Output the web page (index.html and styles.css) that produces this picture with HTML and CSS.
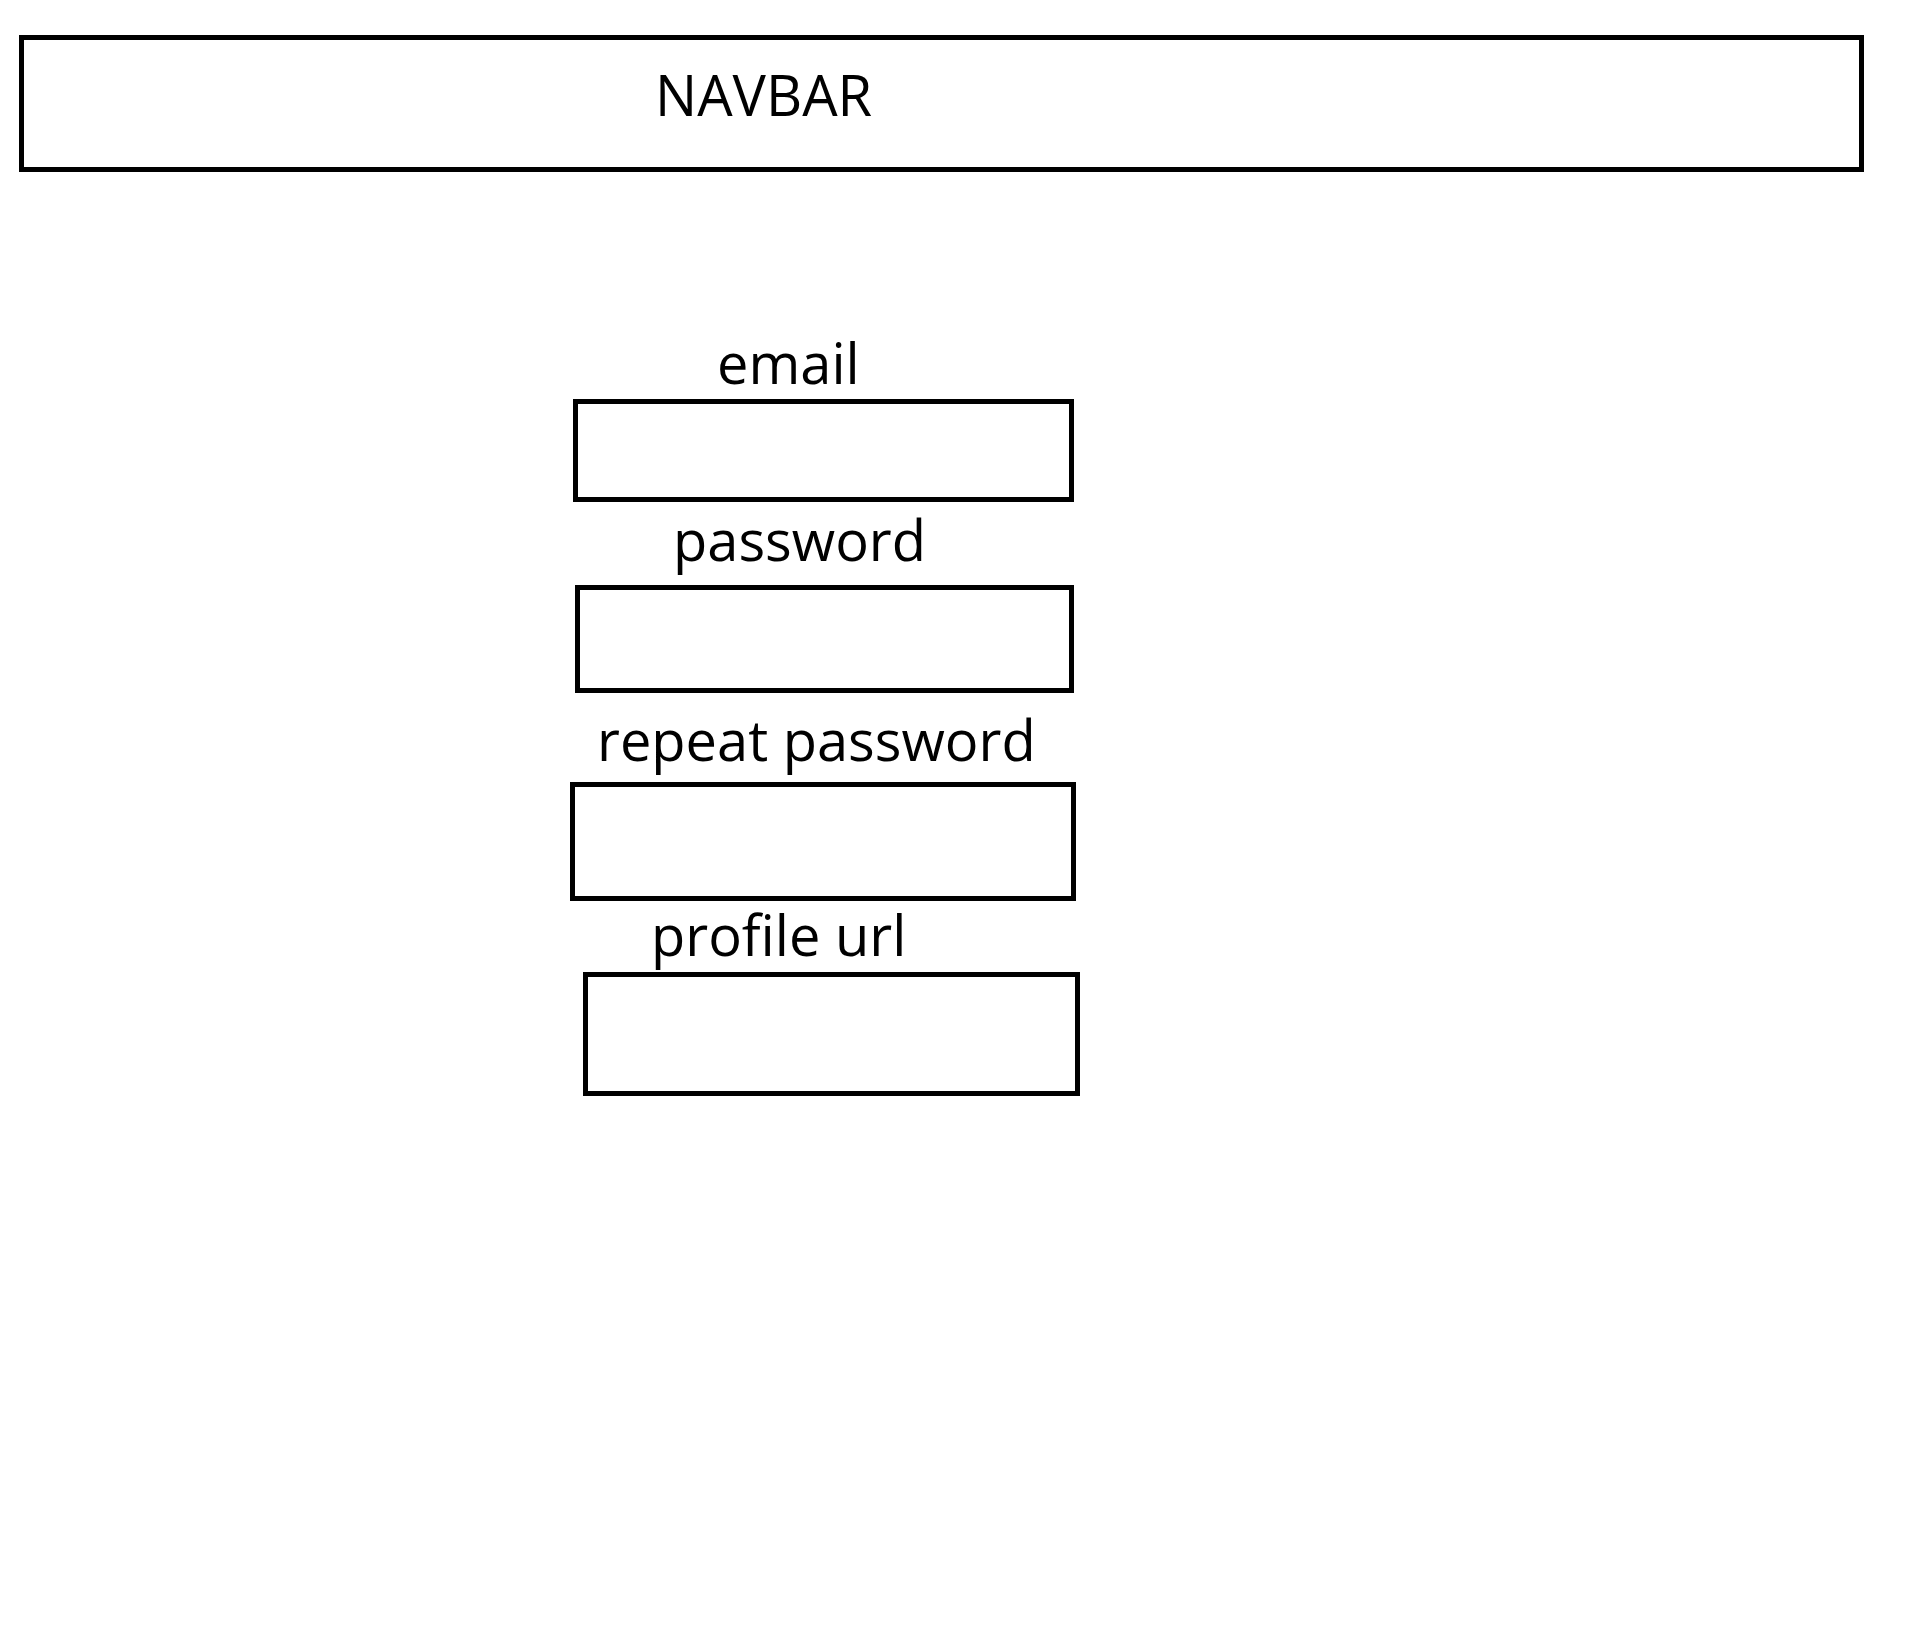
FILE: index.html
```html
<!DOCTYPE html>
<html lang="en">
  <head>
    <meta charset="UTF-8" />
    <meta name="viewport" content="width=device-width, initial-scale=1.0" />
    <title>Sign up</title>
    <link rel="stylesheet" href="styles.css">
  </head>
  <body>
    <header class="navbar">
      <h1>NAVBAR</h1>
    </header>
    <main>
      <form class="signup">
        <div class="field email">
          <label for="email">email</label>
          <input id="email" type="text" />
        </div>
        <div class="field password">
          <label for="password">password</label>
          <input id="password" type="password" />
        </div>
        <div class="field repeat">
          <label for="repeat">repeat password</label>
          <input id="repeat" type="password" />
        </div>
        <div class="field profile">
          <label for="profile">profile url</label>
          <input id="profile" type="text" />
        </div>
      </form>
    </main>
  </body>
</html>
```

FILE: styles.css
```css
* {
  margin: 0px;
  box-sizing: border-box;
}

body {
  background-color: white;
  color: black;
  font-family: "Open Sans", "Noto Sans", sans-serif;
}

.navbar {
  margin: 35px 0px 0px 19px;
  width: 1845px;
  height: 137px;
  border: 5px solid black;
  padding: 16px 0px 0px 631px;
}

.navbar h1 {
  font-size: 56px;
  font-weight: 400;
  line-height: 76px;
}

main {
  margin-left: 570px;
}

.signup {
  display: flex;
  flex-direction: column;
  align-items: flex-start;
}

.field {
  display: flex;
  flex-direction: column;
  align-items: flex-start;
}

label {
  font-size: 56px;
  line-height: 60px;
}

input {
  display: block;
  border: 5px solid black;
  border-radius: 0px;
  background-color: white;
  outline: none;
}

/* each box was drawn by hand, so they don't line up */
.email {
  margin-top: 160px;
}
.email label {
  margin: 0px 0px 7px 147px;
}
.email input {
  margin-left: 3px;
  width: 501px;
  height: 103px;
}

.password {
  margin-top: 7px;
}
.password label {
  margin: 0px 0px 16px 103px;
}
.password input {
  margin-left: 5px;
  width: 499px;
  height: 108px;
}

.repeat {
  margin-top: 16px;
}
.repeat label {
  margin: 0px 0px 13px 27px;
}
.repeat input {
  width: 506px;
  height: 119px;
}

.profile {
  margin-top: 3px;
}
.profile label {
  margin: 0px 0px 8px 81px;
}
.profile input {
  margin-left: 13px;
  width: 497px;
  height: 124px;
}
```
